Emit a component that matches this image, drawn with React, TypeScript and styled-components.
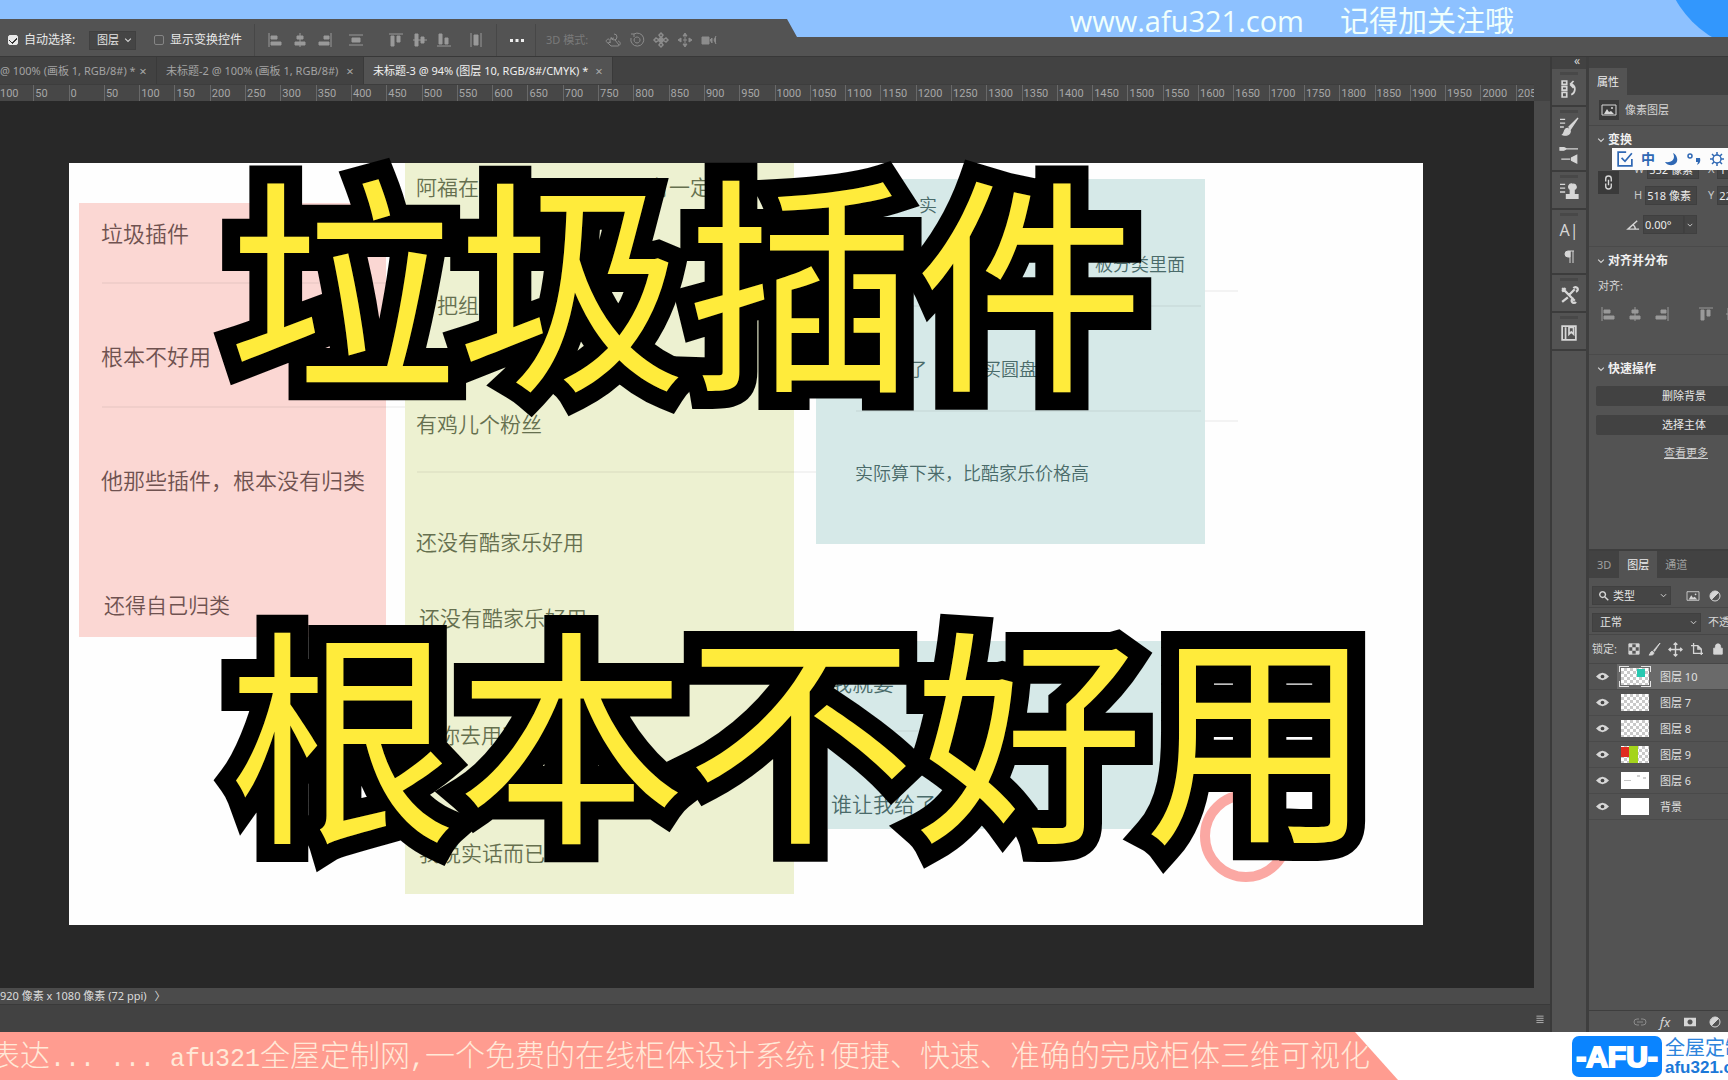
import React from "react";
import styled, { createGlobalStyle, css } from "styled-components";

const uiFont = `"Noto Sans", "Noto Sans CJK SC", sans-serif`;

const GlobalStyle = createGlobalStyle`
  * { box-sizing: border-box; }
  body { margin: 0; background: #424242; overflow: hidden; }
  button, input, select { font: inherit; color: inherit; margin: 0; }
`;

/* ---------- frame ---------- */

const Page = styled.div`
  position: relative;
  display: flex;
  flex-direction: column;
  height: 100vh;
  overflow: hidden;
  background: #424242;
  color: #d6d6d6;
  font: 11px/16px ${uiFont};
  white-space: nowrap;
`;

const TopBanner = styled.header`
  position: absolute;
  top: 0;
  left: 0;
  right: 0;
  height: 37px;
  display: flex;
  justify-content: flex-end;
  align-items: center;
  gap: 36px;
  padding: 4px 214px 0 0;
  overflow: hidden;
  background: #8dc1ff;
  color: #f0fffc;
  font-size: 29px;
  line-height: 32px;
  clip-path: polygon(0 0, 100% 0, 100% 100%, 797px 100%, 787px 19px, 0 19px);
`;

const BannerDisc = styled.span`
  position: absolute;
  right: -135px;
  bottom: -14px;
  width: 200px;
  height: 200px;
  border-radius: 50%;
  background: #3297fd;
`;

const BannerLink = styled.a`
  color: inherit;
  text-decoration: none;
  font-family: "Open Sans", sans-serif;
  font-size: 29px;
`;

const OptionsBar = styled.div`
  flex: none;
  display: flex;
  align-items: center;
  height: 57px;
  padding: 24px 0 0 8px;
  background: #535353;
  border-bottom: 1px solid #383838;
`;

const Workspace = styled.div`
  flex: 1;
  min-height: 0;
  display: flex;
`;

const DocumentArea = styled.main`
  flex: 1;
  min-width: 0;
  display: flex;
  flex-direction: column;
`;

/* ---------- options bar ---------- */

const CheckLabel = styled.label<{ $width: number }>`
  display: flex;
  align-items: center;
  gap: 6px;
  width: ${(p) => p.$width}px;
  font-size: 12px;
  color: #e8e8e8;
`;

const Check = styled.input`
  appearance: none;
  flex: none;
  width: 10px;
  height: 10px;
  border: 1px solid #858585;
  border-radius: 2px;
  &:checked {
    border-color: #e8e8e8;
    background: #e8e8e8;
    background-image: linear-gradient(45deg, transparent 38%, #333 38%, #333 52%, transparent 52%),
      linear-gradient(-45deg, transparent 40%, #333 40%, #333 56%, transparent 56%);
    background-size: 4px 4px, 6px 6px;
    background-position: 0 4px, 3px 1px;
    background-repeat: no-repeat;
  }
`;

const SelectBox = styled.span<{ $width: number }>`
  position: relative;
  flex: none;
  display: inline-flex;
  align-items: center;
  width: ${(p) => p.$width}px;
  height: 19px;
  background: #454545;
  border: 1px solid #404040;
  color: #e4e4e4;
`;

const SelectMark = styled.span<{ $side: "left" | "right" }>`
  position: absolute;
  ${(p) => (p.$side === "left" ? "left: 6px;" : "right: 2px;")}
  display: flex;
  pointer-events: none;
`;

const NativeSelect = styled.select<{ $pad?: number }>`
  appearance: none;
  width: 100%;
  height: 17px;
  padding: 0 0 0 ${(p) => p.$pad ?? 7}px;
  border: 0;
  border-radius: 0;
  background: transparent;
  font-size: 11px;
  line-height: 16px;
`;

const Divider = styled.span<{ $gap?: number }>`
  flex: none;
  width: 1px;
  height: 32px;
  margin: 0 ${(p) => p.$gap ?? 12}px;
  background: #474747;
`;

const IconButton = styled.button`
  flex: none;
  display: inline-flex;
  align-items: center;
  justify-content: center;
  width: 16px;
  height: 18px;
  padding: 0;
  border: 0;
  background: none;
`;

const GlyphButton = styled(IconButton)<{ $size: number; $italic?: boolean }>`
  font-size: ${(p) => p.$size}px;
  font-style: ${(p) => (p.$italic ? "italic" : "normal")};
`;

const IconRun = styled.div<{ $gap: number; $pad?: number }>`
  display: flex;
  align-items: center;
  gap: ${(p) => p.$gap}px;
  padding-left: ${(p) => p.$pad ?? 0}px;
`;

const Muted = styled.span`
  width: 58px;
  color: #7a7a7a;
`;

/* ---------- document tabs and ruler ---------- */

const DocTabs = styled.nav`
  flex: none;
  display: flex;
  height: 27px;
  background: #424242;
`;

const DocTab = styled.div<{ $active?: boolean; $width: number; $pad?: number }>`
  flex: none;
  display: flex;
  align-items: center;
  justify-content: space-between;
  width: ${(p) => p.$width}px;
  padding: 0 8px 0 ${(p) => p.$pad ?? 9}px;
  border-right: 1px solid #3a3a3a;
  background: ${(p) => (p.$active ? "#535353" : "#424242")};
  color: ${(p) => (p.$active ? "#f0f0f0" : "#a3a3a3")};
`;

const CloseButton = styled.button`
  width: 10px;
  height: 16px;
  padding: 0;
  border: 0;
  background: none;
  color: #a8a8a8;
  font-size: 13px;
  line-height: 14px;
`;

const Ruler = styled.div`
  flex: none;
  height: 17px;
  margin-right: 16px;
  overflow: hidden;
  background: #474747;
  border-top: 1px solid #3d3d3d;
`;

const RulerScale = styled.div`
  display: grid;
  grid-template-columns: repeat(44, 1fr);
  width: calc(100% + 19px);
  margin-left: -2px;
`;

const RulerMark = styled.span`
  min-width: 0;
  height: 16px;
  padding: 1px 0 0 1px;
  border-left: 1px solid #686868;
  color: #a6a6a6;
  font: 11px/16px Roboto, sans-serif;
`;

const CanvasRow = styled.div`
  flex: 1;
  min-height: 0;
  display: flex;
`;

const Canvas = styled.section`
  flex: 1;
  min-width: 0;
  padding: 62px 111px 63px 69px;
  background: #282828;
`;

const ScrollTrack = styled.div`
  flex: none;
  width: 16px;
  background: #4b4b4b;
`;

const StatusBar = styled.div`
  flex: none;
  height: 17px;
  display: flex;
  gap: 8px;
  background: #4b4b4b;
  border-bottom: 1px solid #3a3a3a;
  color: #dcdcdc;
  line-height: 15px;
`;

const TimelineBar = styled.div`
  flex: none;
  height: 27px;
  display: flex;
  align-items: center;
  justify-content: flex-end;
  padding-right: 2px;
  background: #424242;
`;

/* ---------- artboard: free canvas ---------- */

const Artboard = styled.div`
  position: relative;
  height: 100%;
  background: #fefefe;
`;

const Clip = styled.div`
  position: absolute;
  inset: 0;
  overflow: hidden;
`;

type Box = { $x: number; $y: number; $w: number; $h: number };

const Block = styled.div<Box & { $color: string }>`
  position: absolute;
  left: ${(p) => p.$x}px;
  top: ${(p) => p.$y}px;
  width: ${(p) => p.$w}px;
  height: ${(p) => p.$h}px;
  background: ${(p) => p.$color};
`;

const Rule = styled.div<{ $x: number; $y: number; $w: number }>`
  position: absolute;
  left: ${(p) => p.$x}px;
  top: ${(p) => p.$y}px;
  width: ${(p) => p.$w}px;
  height: 2px;
  background: rgba(60, 60, 60, 0.06);
`;

const Note = styled.span<{ $x: number; $y: number; $size: number; $color: string }>`
  position: absolute;
  left: ${(p) => p.$x}px;
  top: ${(p) => p.$y}px;
  color: ${(p) => p.$color};
  font: 350 ${(p) => p.$size}px/32px "Noto Sans CJK SC", sans-serif;
`;

const Ring = styled.div`
  position: absolute;
  left: 1131px;
  top: 627px;
  width: 92px;
  height: 92px;
  border: 10px solid #fba8a3;
  border-radius: 50%;
`;

const Caption = styled.h1`
  position: absolute;
  left: 159px;
  top: -115px;
  margin: 0;
  color: #ffeb3b;
  font: 400 229px/452px "Noto Sans CJK SC", sans-serif;
  -webkit-text-stroke: 36px #000;
  paint-order: stroke fill;
`;

const CaptionLine = styled.span`
  display: block;
`;

/* ---------- dock ---------- */

const Dock = styled.aside`
  flex: none;
  display: flex;
  flex-direction: column;
  width: 39px;
  border-left: 2px solid #3a3a3a;
  border-right: 3px solid #3e3e3e;
  background: #535353;
`;

const DockHead = styled.div`
  height: 12px;
  padding-right: 6px;
  background: #424242;
  color: #d6d6d6;
  font-size: 12px;
  line-height: 8px;
  text-align: right;
`;

const DockGroup = styled.div`
  display: flex;
  flex-direction: column;
  align-items: center;
  gap: 9px;
  padding: 11px 0 7px;
  border-bottom: 2px solid #3c3c3c;
  background: linear-gradient(#484848, #484848) center 3px / 18px 3px no-repeat;
`;

/* ---------- panels ---------- */

const PanelColumn = styled.aside`
  flex: none;
  width: 139px;
  overflow: hidden;
`;

const PanelInner = styled.div`
  display: flex;
  flex-direction: column;
  width: 192px;
  height: 100%;
  background: #535353;
`;

const PanelTabs = styled.div<{ $top?: number }>`
  flex: none;
  display: flex;
  height: ${(p) => 27 + (p.$top ?? 0)}px;
  padding-top: ${(p) => p.$top ?? 0}px;
  background: #424242;
`;

const PanelTab = styled.button<{ $active?: boolean }>`
  padding: 0 8px;
  border: 0;
  background: ${(p) => (p.$active ? "#535353" : "transparent")};
  color: ${(p) => (p.$active ? "#ededed" : "#a0a0a0")};
`;

const Properties = styled.section`
  position: relative;
  flex: none;
  height: 456px;
  border-bottom: 2px solid #3e3e3e;
`;

const LayerKind = styled.div`
  display: flex;
  align-items: center;
  gap: 6px;
  height: 31px;
  padding: 0 0 0 10px;
  border-bottom: 1px solid #474747;
`;

const DarkTile = styled.span`
  display: inline-flex;
  align-items: center;
  justify-content: center;
  width: 20px;
  height: 20px;
  background: #3a3a3a;
`;

const Group = styled.div<{ $height: number; $last?: boolean }>`
  height: ${(p) => p.$height}px;
  padding: 5px 9px 0 7px;
  border-bottom: ${(p) => (p.$last ? 0 : 1)}px solid #4a4a4a;
`;

const GroupTitle = styled.h2`
  display: flex;
  align-items: center;
  gap: 2px;
  margin: 0;
  color: #f0f0f0;
  font: 700 12px/17px ${uiFont};
`;

const TransformGrid = styled.div`
  display: grid;
  grid-template-columns: 36px 74px 1fr;
  grid-template-rows: 20px 20px;
  row-gap: 6px;
  align-items: center;
  padding: 11px 0 0 2px;
`;

const Chain = styled.button`
  grid-row: 1 / 3;
  align-self: center;
  display: inline-flex;
  align-items: center;
  justify-content: center;
  width: 21px;
  height: 23px;
  padding: 0;
  border: 0;
  background: #3a3a3a;
`;

const Field = styled.label`
  display: flex;
  align-items: center;
  gap: 3px;
  color: #c8c8c8;
`;

const FieldInput = styled.input<{ $width: number }>`
  width: ${(p) => p.$width}px;
  height: 19px;
  padding: 0 1px;
  border: 1px solid #3f3f3f;
  background: #454545;
  color: #ececec;
  outline: 0;
`;

const AngleRow = styled.div`
  display: flex;
  align-items: center;
  padding: 10px 0 0 31px;
`;

const AlignLabel = styled.p`
  margin: 9px 0 11px 2px;
`;

const ActionButton = styled.button`
  display: block;
  width: 100%;
  height: 20px;
  margin-top: 9px;
  padding: 0;
  border: 0;
  border-radius: 2px;
  background: #424242;
  color: #e8e8e8;
`;

const MoreLink = styled.a`
  display: block;
  margin-top: 10px;
  padding-left: 4px;
  color: #d0d0d0;
  text-align: center;
  text-decoration: underline;
`;

const ImeBar = styled.div`
  position: absolute;
  top: 53px;
  left: 23px;
  display: flex;
  align-items: center;
  gap: 7px;
  width: 169px;
  height: 22px;
  padding-left: 5px;
  background: #fcfcfc;
  color: #2f68b4;
  font-weight: 700;
`;

const LayersPanel = styled.section`
  flex: 1;
  display: flex;
  flex-direction: column;
`;

const LayerRowBar = styled.div<{ $height: number; $top?: number }>`
  display: flex;
  align-items: center;
  gap: 7px;
  height: ${(p) => p.$height}px;
  padding: ${(p) => p.$top ?? 0}px 0 0 3px;
  border-bottom: 1px solid #474747;
`;

const LayerList = styled.ul`
  flex: 1;
  margin: 0;
  padding: 0;
  list-style: none;
`;

const LayerItem = styled.li<{ $active?: boolean }>`
  display: flex;
  align-items: center;
  height: 26px;
  border-bottom: 1px solid #4a4a4a;
  background: ${(p) => (p.$active ? "linear-gradient(90deg, #535353 28px, #6a6a6a 28px)" : "none")};
  color: #e0e0e0;
`;

const EyeButton = styled(IconButton)`
  width: 27px;
`;

const ThumbFrame = styled.span<{ $active?: boolean }>`
  display: flex;
  margin: 0 9px 0 3px;
  padding: 2px;
  ${(p) =>
    p.$active &&
    css`
      background: linear-gradient(#e4e4e4, #e4e4e4) 0 0 / 10px 1px, linear-gradient(#e4e4e4, #e4e4e4) 100% 0 / 10px 1px,
        linear-gradient(#e4e4e4, #e4e4e4) 0 100% / 10px 1px, linear-gradient(#e4e4e4, #e4e4e4) 100% 100% / 10px 1px,
        linear-gradient(#e4e4e4, #e4e4e4) 0 0 / 1px 6px, linear-gradient(#e4e4e4, #e4e4e4) 100% 0 / 1px 6px,
        linear-gradient(#e4e4e4, #e4e4e4) 0 100% / 1px 6px, linear-gradient(#e4e4e4, #e4e4e4) 100% 100% / 1px 6px;
      background-repeat: no-repeat;
    `}
`;

const Thumb = styled.span<{ $plain?: boolean }>`
  position: relative;
  width: 28px;
  height: 17px;
  overflow: hidden;
  background: ${(p) => (p.$plain ? "#fff" : "repeating-conic-gradient(#c9c9c9 0 25%, #fff 0 50%) 0 0 / 6px 6px")};
`;

const ThumbPatch = styled.i<Box & { $color: string }>`
  position: absolute;
  left: ${(p) => p.$x}px;
  top: ${(p) => p.$y}px;
  width: ${(p) => p.$w}px;
  height: ${(p) => p.$h}px;
  background: ${(p) => p.$color};
`;

const LayerFooter = styled.div`
  flex: none;
  display: flex;
  align-items: center;
  gap: 9px;
  height: 22px;
  padding-left: 43px;
  border-top: 1px solid #3e3e3e;
`;

/* ---------- bottom ticker ---------- */

const Ticker = styled.footer`
  flex: none;
  display: flex;
  justify-content: space-between;
  height: 48px;
  overflow: hidden;
  background: #fff;
`;

const TickerText = styled.p`
  flex: none;
  width: 1398px;
  height: 48px;
  margin: 0;
  text-indent: -10px;
  background: #ff9c90;
  color: #ffe9d8;
  font: 300 30px/42px "Noto Sans CJK SC", sans-serif;
  clip-path: polygon(0 0, calc(100% - 43px) 0, 100% 100%, 0 100%);
  white-space: pre;
`;

const Mono = styled.span`
  font: 25px/40px "Liberation Mono", monospace;
`;

const Brand = styled.div`
  flex: none;
  display: flex;
  gap: 3px;
  width: 156px;
  padding-top: 4px;
`;

const BrandMark = styled.strong`
  flex: none;
  display: flex;
  align-items: center;
  justify-content: center;
  width: 90px;
  height: 41px;
  border-radius: 7px;
  background: #0a84ff;
  color: #fff;
  font: 700 30px/41px "Liberation Sans Narrow", "Liberation Sans", sans-serif;
  -webkit-text-stroke: 2px #fff;
`;

const BrandText = styled.div`
  display: flex;
  flex-direction: column;
  color: #2d84dc;
  font: 20px/22px "Noto Sans CJK SC", sans-serif;
`;

const BrandUrl = styled.a`
  color: #1b78d8;
  text-decoration: none;
  font: 700 17px/19px "Liberation Sans Narrow", "Liberation Sans", sans-serif;
`;

/* ---------- icons ---------- */

const shapes: Record<string, React.ReactNode> = {
  left: <path d="M1 0v14M3 3h6v3H3zM3 9h10v3H3z" />,
  hcenter: <path d="M7 0v14M4 3h6v3H4zM2 9h10v3H2z" />,
  right: <path d="M13 0v14M6 3h5v3H6zM1 9h10v3H1z" />,
  spread: <path d="M0 2h14M0 12h14M3 5h8v4H3z" />,
  top: <path d="M0 1h14M2 3h3v10H2zM8 3h3v6H8z" />,
  vcenter: <path d="M0 7h14M2 1h3v12H2zM8 4h3v6H8z" />,
  bottom: <path d="M0 13h14M2 1h3v10H2zM8 5h3v6H8z" />,
  vspread: <path d="M2 0v14M12 0v14M5 2h4v10H5z" />,
  dots: <path d="M0 6h3v3H0zM5.500 6h3v3h-3zM11 6h3v3h-3z" stroke="none" />,
  chevron: <path d="M3 5l4 4 4-4" fill="none" strokeWidth="1.500" />,
  orbit: <path d="M3 6C0 6-1 9 2 10M2 10l3-1M2 10l3 3h7c3-1 3-4 0-5M4 9V6l4-1M8 1a3 3 0 1 1-3 3M9 7l4 5" fill="none" />,
  roll: <path d="M4 1a6.500 6.500 0 1 1-3 4M1 1h3v3M7 4a3 3 0 1 0 .1 0" fill="none" />,
  pan: <path d="M7 0l2 2-2 3-2-3zM7 9l2 3-2 2-2-2zM0 7l2-2 3 2-3 2zM14 7l-2-2-3 2 3 2zM5 5l4 4M9 5L5 9" fill="none" strokeWidth="1.500" />,
  slide: <path d="M7 0l2 3H5zM7 14l2-3H5zM0 7l3-2v4zM14 7l-3-2v4zM5 7h4M7 4v6" />,
  camera: <path d="M0 4h7v7H0zM8 7l2-2v5zM14 3l-2 4 2 4" />,
  history: <path d="M1 0h4v3H1zM1 5h4v3H1zM1 10h4v4H1zM8 3h2c3 2 3 7-1 9M8 3l3-3M8 3l3 3" fill="none" strokeWidth="1.5" />,
  brush: <path d="M14 0L7 7l1 2zM6 8c-3 0-2 3-4 5 3 1 6 0 6-3zM0 1h4M0 4h4M0 7h3" />,
  sliders: <path d="M5 3h9M0 2h3l2 1-2 1H0zM1 11h7M13 8v6l-4-2v-2z" />,
  stamp: <path d="M10 1a2 2 0 0 1 1 4v3H8V5a2 2 0 0 1 2-4zM5 9h9v3H5zM0 1h4M0 4h4M0 7h4" />,
  para: <path d="M8 1v12M11 1v12M12 1H6a3 3 0 0 0 0 6h2V1" />,
  tools: <path d="M1 1l11 11M1 4l3-3M1 13l5-4M7 7l5-5M11 10a2 2 0 1 0 2 3M11 1a2 2 0 1 1 2 3" fill="none" strokeWidth="2" />,
  book: <path d="M1 1h12v12H1zM4 2v11M7 2h4v6L9 6 7 8z" fill="none" strokeWidth="1.5" />,
  image: (
    <>
      <path d="M0 2h14v10H0z" fill="none" />
      <path d="M2 11l3-5 2 3 2-1 3 3z" stroke="none" />
      <circle cx="10" cy="5" r="1" stroke="none" />
    </>
  ),
  chain: <path d="M4 6V3a3 3 0 0 1 6 0v3M4 8v3a3 3 0 0 0 6 0V8M7 4v6" fill="none" strokeWidth="1.500" />,
  angle: <path d="M13 12H1L11 3M6 7a6 6 0 0 1 3 5" fill="none" strokeWidth="1.500" />,
  search: <path d="M5 1a4 4 0 1 0 .1 0M8 8l5 5" fill="none" strokeWidth="2" />,
  half: (
    <>
      <circle cx="7" cy="7" r="5" fill="none" />
      <path d="M3.500 10.500A5 5 0 0 1 10.500 3.500z" />
    </>
  ),
  checker: (
    <>
      <path d="M1 1h12v12H1z" fill="none" />
      <path d="M1 1h4v4H1zM9 1h4v4H9zM5 5h4v4H5zM1 9h4v4H1zM9 9h4v4H9z" stroke="none" />
    </>
  ),
  paint: <path d="M13 0L6 8l1 1zM5 9c-3 0-2 3-4 4 3 0 6 0 5-3z" />,
  move: <path d="M7 0v14M0 7h14M5 2l2-2 2 2M5 12l2 2 2-2M2 5L0 7l2 2M12 5l2 2-2 2" fill="none" strokeWidth="1.500" />,
  crop: <path d="M3 0v12h11M0 3h8l4 4v7M8 3v4h4" fill="none" strokeWidth="1.500" />,
  lock: <path d="M2 6h10v7H2zM4 6V4a3 3 0 0 1 6 0v2" fillRule="evenodd" />,
  eye: (
    <>
      <path d="M0 7q7-8 14 0-7 8-14 0z" stroke="none" />
      <circle cx="7" cy="7" r="2" fill="#444" stroke="none" />
    </>
  ),
  link: <path d="M6 4H4a3 3 0 0 0 0 6h2M8 4h2a3 3 0 0 1 0 6H8M4 7h6" fill="none" />,
  mask: <path d="M0 2h14v10H0zM7 4a3 3 0 1 0 .1 0z" fillRule="evenodd" stroke="none" />,
  menu: <path d="M2 3h10M2 6h10M2 9h10M2 12h10" />,
  note: <path d="M13 7v6H1V1h7M4 6l3 3 6-7" fill="none" strokeWidth="1.500" />,
  moon: <path d="M9 1c3 6-1 10-8 9 4 6 14 3 12-4-1-3-2-4-4-5z" stroke="none" />,
  punct: (
    <>
      <circle cx="3" cy="4" r="2" fill="none" strokeWidth="1.500" />
      <path d="M9 6h4c1 4-1 6-3 7l1-3H9z" stroke="none" />
    </>
  ),
  gear: (
    <>
      <circle cx="7" cy="7" r="4" fill="none" strokeWidth="1.500" />
      <path d="M7 0v3M7 11v3M0 7h3M11 7h3M2 2l2 2M10 10l2 2M2 12l2-2M10 4l2-2" strokeWidth="1.500" />
    </>
  ),
};

function Icon({ name, size = 14, color = "#d6d6d6" }: { name: string; size?: number; color?: string }) {
  return (
    <svg width={size} height={size} viewBox="0 0 14 14" fill={color} stroke={color} strokeWidth="1" aria-hidden="true" overflow="visible">
      {shapes[name]}
    </svg>
  );
}

/* ---------- data ---------- */

const marks = [100, 50, ...Array.from({ length: 42 }, (_, i) => i * 50)];

const BROWN = "#6f5250";
const OLIVE = "#66704f";
const TEAL = "#4a6b6a";

const notes: [number, number, number, string, string][] = [
  [32, 53, 22, BROWN, "垃圾插件"],
  [32, 176, 22, BROWN, "根本不好用"],
  [32, 300, 22, BROWN, "他那些插件，根本没有归类"],
  [35, 425, 21, BROWN, "还得自己归类"],
  [347, 7, 21, OLIVE, "阿福在"],
  [579, 7, 21, OLIVE, "有一定"],
  [368, 125, 21, OLIVE, "把组"],
  [347, 244, 21, OLIVE, "有鸡儿个粉丝"],
  [347, 362, 21, OLIVE, "还没有酷家乐好用"],
  [350, 438, 21, OLIVE, "还没有酷家乐好用"],
  [370, 555, 21, OLIVE, "你去用我"],
  [350, 673, 21, OLIVE, "我说实话而已"],
  [850, 25, 18, TEAL, "实"],
  [1026, 84, 18, TEAL, "板分类里面"],
  [840, 189, 18, TEAL, "了"],
  [914, 189, 18, TEAL, "买圆盘"],
  [786, 293, 18, TEAL, "实际算下来，比酷家乐价格高"],
  [762, 503, 21, TEAL, "我就要"],
  [762, 624, 21, TEAL, "谁让我给了"],
];

const rules: [number, number, number][] = [
  [33, 119, 284],
  [33, 243, 303],
  [348, 308, 399],
  [787, 142, 345],
  [787, 247, 345],
  [1136, 127, 33],
  [1136, 257, 33],
  [763, 567, 100],
];

const layers: { name: string; plain?: boolean; active?: boolean; patches?: [number, number, number, number, string][] }[] = [
  { name: "图层 10", active: true, patches: [[16, 1, 8, 8, "#27c8b0"]] },
  { name: "图层 7" },
  { name: "图层 8" },
  {
    name: "图层 9",
    patches: [
      [0, 1, 8, 10, "#e02d20"],
      [8, 0, 9, 17, "#a4d41c"],
    ],
  },
  {
    name: "图层 6",
    plain: true,
    patches: [
      [3, 8, 7, 1, "#c4c4c4"],
      [16, 3, 3, 2, "#d0d0d0"],
      [22, 5, 3, 2, "#d0d0d0"],
    ],
  },
  { name: "背景", plain: true },
];

const alignA = ["left", "hcenter", "right"];
const alignB = ["top", "vcenter", "bottom"];

function Tool({ name, label, color, size }: { name: string; label: string; color?: string; size?: number }) {
  return (
    <IconButton aria-label={label}>
      <Icon name={name} color={color} size={size} />
    </IconButton>
  );
}

export default function App() {
  return (
    <Page>
      <GlobalStyle />
      <OptionsBar>
        <CheckLabel $width={81}>
          <Check type="checkbox" defaultChecked />
          自动选择:
        </CheckLabel>
        <SelectBox $width={47}>
          <NativeSelect aria-label="自动选择目标">
            <option>图层</option>
          </NativeSelect>
          <SelectMark $side="right">
            <Icon name="chevron" size={10} />
          </SelectMark>
        </SelectBox>
        <IconRun $gap={0} $pad={18}>
          <CheckLabel $width={88}>
            <Check type="checkbox" />
            <span>显示变换控件</span>
          </CheckLabel>
        </IconRun>
        <Divider />
        <IconRun $gap={9}>
          {alignA.map((n) => (
            <Tool key={n} name={n} label={n} color="#999" />
          ))}
        </IconRun>
        <IconRun $gap={24} $pad={15}>
          <Tool name="spread" label="spread" color="#999" />
          <IconRun $gap={8}>
            {alignB.map((n) => (
              <Tool key={n} name={n} label={n} color="#999" />
            ))}
          </IconRun>
        </IconRun>
        <IconRun $gap={0} $pad={16}>
          <Tool name="vspread" label="vspread" color="#999" />
        </IconRun>
        <Divider />
        <Tool name="dots" label="more" color="#eee" />
        <Divider $gap={10} />
        <Muted>3D 模式:</Muted>
        <IconRun $gap={8} $pad={1}>
          {["orbit", "roll", "pan", "slide", "camera"].map((n) => (
            <Tool key={n} name={n} label={n} color="#8c8c8c" />
          ))}
        </IconRun>
      </OptionsBar>

      <Workspace>
        <DocumentArea>
          <DocTabs>
            <DocTab $width={157} $pad={0}>
              @ 100% (画板 1, RGB/8#) * <CloseButton aria-label="close">×</CloseButton>
            </DocTab>
            <DocTab $width={207}>
              未标题-2 @ 100% (画板 1, RGB/8#) <CloseButton aria-label="close">×</CloseButton>
            </DocTab>
            <DocTab $width={249} $active>
              未标题-3 @ 94% (图层 10, RGB/8#/CMYK) * <CloseButton aria-label="close">×</CloseButton>
            </DocTab>
          </DocTabs>
          <Ruler>
            <RulerScale>
              {marks.map((m, i) => (
                <RulerMark key={i}>{m}</RulerMark>
              ))}
            </RulerScale>
          </Ruler>
          <CanvasRow>
            <Canvas>
              <Artboard>
                <Clip>
                  <Block $x={10} $y={40} $w={307} $h={434} $color="#fbd7d3" />
                  <Block $x={336} $y={0} $w={389} $h={731} $color="#edf1d1" />
                  <Block $x={747} $y={16} $w={389} $h={365} $color="#d6e9e8" />
                  <Block $x={759} $y={478} $w={367} $h={188} $color="#d6e9e8" />
                  {rules.map(([x, y, w]) => (
                    <Rule key={`${x}-${y}`} $x={x} $y={y} $w={w} />
                  ))}
                  {notes.map(([x, y, size, color, text]) => (
                    <Note key={`${x}-${y}`} $x={x} $y={y} $size={size} $color={color}>
                      {text}
                    </Note>
                  ))}
                  <Ring />
                </Clip>
                <Caption>
                  <CaptionLine>垃圾插件</CaptionLine>
                  <CaptionLine>根本不好用</CaptionLine>
                </Caption>
              </Artboard>
            </Canvas>
            <ScrollTrack />
          </CanvasRow>
          <StatusBar>
            <span>920 像素 x 1080 像素 (72 ppi)</span>
            <span>〉</span>
          </StatusBar>
          <TimelineBar>
            <Tool name="menu" label="menu" size={10} />
          </TimelineBar>
        </DocumentArea>

        <Dock>
          <DockHead>«</DockHead>
          <DockGroup>
            <Tool name="history" label="history" size={16} />
          </DockGroup>
          <DockGroup>
            <Tool name="brush" label="brush settings" size={18} />
            <Tool name="sliders" label="brushes" size={18} />
          </DockGroup>
          <DockGroup>
            <Tool name="stamp" label="clone source" size={18} />
          </DockGroup>
          <DockGroup>
            <GlyphButton $size={16}>A|</GlyphButton>
            <Tool name="para" label="paragraph" />
          </DockGroup>
          <DockGroup>
            <Tool name="tools" label="tool presets" size={16} />
          </DockGroup>
          <DockGroup>
            <Tool name="book" label="libraries" size={16} />
          </DockGroup>
        </Dock>

        <PanelColumn>
          <PanelInner>
            <PanelTabs $top={11}>
              <PanelTab $active>属性</PanelTab>
            </PanelTabs>
            <Properties>
              <LayerKind>
                <DarkTile>
                  <Icon name="image" />
                </DarkTile>
                像素图层
              </LayerKind>
              <Group $height={121}>
                <GroupTitle>
                  <Icon name="chevron" size={10} />
                  变换
                </GroupTitle>
                <TransformGrid>
                  <Chain aria-label="link">
                    <Icon name="chain" size={13} />
                  </Chain>
                  <Field>
                    W
                    <FieldInput $width={52} defaultValue="552 像素" />
                  </Field>
                  <Field>
                    X
                    <FieldInput $width={52} defaultValue="1138 像素" />
                  </Field>
                  <Field>
                    H
                    <FieldInput $width={52} defaultValue="518 像素" />
                  </Field>
                  <Field>
                    Y
                    <FieldInput $width={52} defaultValue="22 像素" />
                  </Field>
                </TransformGrid>
                <AngleRow>
                  <Field>
                    <Icon name="angle" size={13} />
                    <FieldInput $width={41} defaultValue="0.00°" />
                  </Field>
                  <SelectBox $width={13}>
                    <NativeSelect aria-label="角度" $pad={0}>
                      <option aria-label="0.00°" />
                    </NativeSelect>
                    <SelectMark $side="right">
                      <Icon name="chevron" size={8} />
                    </SelectMark>
                  </SelectBox>
                </AngleRow>
              </Group>
              <Group $height={108}>
                <GroupTitle>
                  <Icon name="chevron" size={10} />
                  对齐并分布
                </GroupTitle>
                <AlignLabel>对齐:</AlignLabel>
                <IconRun $gap={28} $pad={4}>
                  <IconRun $gap={11}>
                    {alignA.map((n) => (
                      <Tool key={n} name={n} label={n} color="#999" />
                    ))}
                  </IconRun>
                  <IconRun $gap={11}>
                    {alignB.map((n) => (
                      <Tool key={n} name={n} label={n} color="#999" />
                    ))}
                  </IconRun>
                </IconRun>
              </Group>
              <Group $height={120} $last>
                <GroupTitle>
                  <Icon name="chevron" size={10} />
                  快速操作
                </GroupTitle>
                <ActionButton>删除背景</ActionButton>
                <ActionButton>选择主体</ActionButton>
                <MoreLink href="#more">查看更多</MoreLink>
              </Group>
              <ImeBar>
                <Icon name="note" size={16} color="#2f68b4" />
                <GlyphButton $size={14}>中</GlyphButton>
                <Tool name="moon" label="width" color="#2f68b4" />
                <Tool name="punct" label="punctuation" color="#2f68b4" />
                <Tool name="gear" label="settings" color="#2f68b4" />
              </ImeBar>
            </Properties>
            <LayersPanel>
              <PanelTabs>
                <PanelTab>3D</PanelTab>
                <PanelTab $active>图层</PanelTab>
                <PanelTab>通道</PanelTab>
              </PanelTabs>
              <LayerRowBar $height={30} $top={6}>
                <SelectBox $width={79}>
                  <SelectMark $side="left">
                    <Icon name="search" size={10} />
                  </SelectMark>
                  <NativeSelect aria-label="筛选" $pad={20}>
                    <option>类型</option>
                  </NativeSelect>
                  <SelectMark $side="right">
                    <Icon name="chevron" size={9} />
                  </SelectMark>
                </SelectBox>
                <IconRun $gap={6} $pad={7}>
                  <Tool name="image" label="pixel" size={12} />
                  <Tool name="half" label="adjustment" />
                </IconRun>
              </LayerRowBar>
              <LayerRowBar $height={27} $top={2}>
                <SelectBox $width={109}>
                  <NativeSelect aria-label="混合模式">
                    <option>正常</option>
                  </NativeSelect>
                  <SelectMark $side="right">
                    <Icon name="chevron" size={9} />
                  </SelectMark>
                </SelectBox>
                不透明度:
              </LayerRowBar>
              <LayerRowBar $height={29}>
                锁定:
                <IconRun $gap={5} $pad={2}>
                  <Tool name="checker" label="transparent" size={12} />
                  <Tool name="paint" label="pixels" size={13} />
                  <Tool name="move" label="position" size={13} />
                  <Tool name="crop" label="artboard" size={12} />
                  <Tool name="lock" label="all" size={12} />
                </IconRun>
              </LayerRowBar>
              <LayerList>
                {layers.map((l) => (
                  <LayerItem key={l.name} $active={l.active}>
                    <EyeButton aria-label="visibility">
                      <Icon name="eye" size={13} />
                    </EyeButton>
                    <ThumbFrame $active={l.active}>
                      <Thumb $plain={l.plain}>
                        {l.patches?.map(([x, y, w, h, c]) => (
                          <ThumbPatch key={x} $x={x} $y={y} $w={w} $h={h} $color={c} />
                        ))}
                      </Thumb>
                    </ThumbFrame>
                    {l.name}
                  </LayerItem>
                ))}
              </LayerList>
              <LayerFooter>
                <Tool name="link" label="link" color="#8c8c8c" />
                <GlyphButton $size={13} $italic>
                  fx
                </GlyphButton>
                <Tool name="mask" label="mask" size={12} />
                <Tool name="half" label="adjustment layer" />
              </LayerFooter>
            </LayersPanel>
          </PanelInner>
        </PanelColumn>
      </Workspace>

      <Ticker>
        <TickerText>
          表达<Mono>... ... afu321</Mono>全屋定制网<Mono>,</Mono>一个免费的在线柜体设计系统<Mono>!</Mono>
          便捷、快速、准确的完成柜体三维可视化
        </TickerText>
        <Brand>
          <BrandMark>-AFU-</BrandMark>
          <BrandText>
            全屋定制网
            <BrandUrl href="#home">afu321.com</BrandUrl>
          </BrandText>
        </Brand>
      </Ticker>

      <TopBanner>
        <BannerLink href="#site">www.afu321.com</BannerLink>
        <span>记得加关注哦</span>
        <BannerDisc />
      </TopBanner>
    </Page>
  );
}
